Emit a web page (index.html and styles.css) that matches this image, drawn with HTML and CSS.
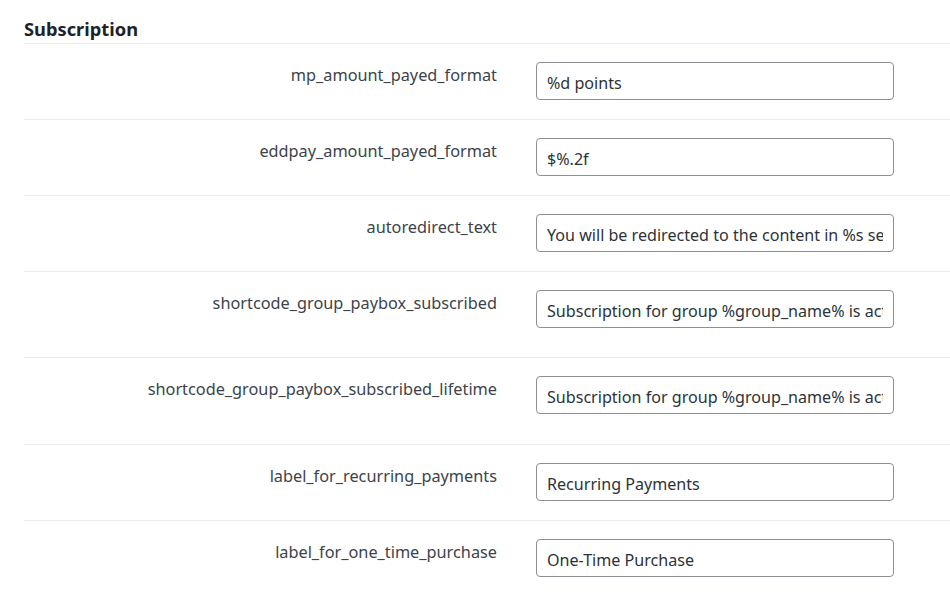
FILE: index.html
```html
<!DOCTYPE html>
<html>
<head>
<meta charset="utf-8">
<link rel="stylesheet" href="styles.css">
</head>
<body>
<div class="page">
  <h2 class="section-title">Subscription</h2>
  <div class="form-table">
    <div class="row">
      <label class="label">mp_amount_payed_format</label>
      <div class="field"><input class="input" type="text" value="%d points"></div>
    </div>
    <div class="row">
      <label class="label">eddpay_amount_payed_format</label>
      <div class="field"><input class="input" type="text" value="$%.2f"></div>
    </div>
    <div class="row">
      <label class="label">autoredirect_text</label>
      <div class="field"><input class="input" type="text" value="You will be redirected to the content in %s seconds"></div>
    </div>
    <div class="row tall">
      <label class="label">shortcode_group_paybox_subscribed</label>
      <div class="field"><input class="input" type="text" value="Subscription for group %group_name% is active"></div>
    </div>
    <div class="row tall">
      <label class="label">shortcode_group_paybox_subscribed_lifetime</label>
      <div class="field"><input class="input" type="text" value="Subscription for group %group_name% is active"></div>
    </div>
    <div class="row">
      <label class="label">label_for_recurring_payments</label>
      <div class="field"><input class="input" type="text" value="Recurring Payments"></div>
    </div>
    <div class="row">
      <label class="label">label_for_one_time_purchase</label>
      <div class="field"><input class="input" type="text" value="One-Time Purchase"></div>
    </div>
  </div>
</div>
</body>
</html>
```
FILE: styles.css
```css
html, body {
  margin: 0;
  padding: 0;
  background: #ffffff;
}
body {
  font-family: "Noto Sans", "Open Sans", "Liberation Sans", sans-serif;
  color: #3c434a;
}
.page {
  padding-left: 24px;
}
.section-title {
  margin: 0;
  padding-top: 15px;
  height: 28px;
  font-size: 18.3px;
  line-height: 27px;
  font-weight: 700;
  color: #1d2327;
}
.row {
  display: flex;
  border-top: 1px solid #ebebeb;
  padding: 18px 0 19px;
}
.row.tall {
  padding-bottom: 29px;
}
.row.tall + .row.tall {
  padding-bottom: 30px;
}
.label {
  width: 473px;
  padding-right: 10px;
  padding-top: 2px;
  text-align: right;
  font-size: 16.3px;
  line-height: 22px;
  color: #3c434a;
}
.field {
  padding-left: 29px;
}
.input {
  box-sizing: border-box;
  width: 358px;
  height: 38px;
  margin: 0;
  padding: 3px 10px 0;
  border: 1px solid #8c8f94;
  border-radius: 4px;
  font-family: inherit;
  font-size: 16.1px;
  color: #2c3338;
  background: #fff;
  outline: none;
}
```
